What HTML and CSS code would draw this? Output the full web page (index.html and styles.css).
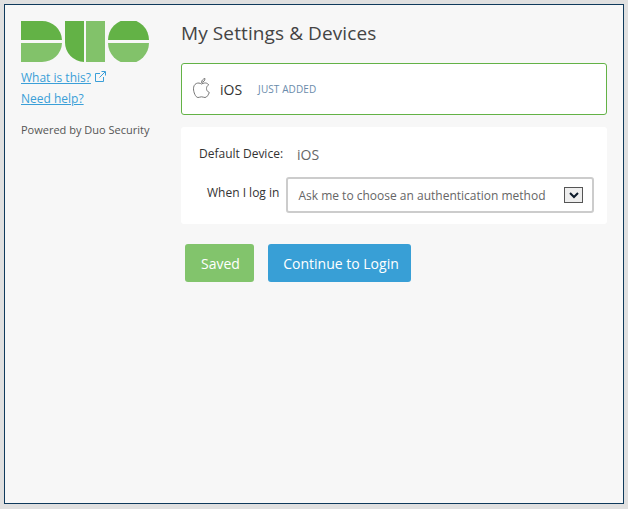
FILE: index.html
```html
<!DOCTYPE html>
<html lang="en">
<head>
    <meta charset="UTF-8">
    <title>My Settings &amp; Devices</title>
    <link rel="stylesheet" href="styles.css">
</head>
<body>
    <div class="frame">
        <div class="sidebar">
            <svg class="logo" width="128" height="41" viewBox="0 0 128 41">
                <path fill="#63b246" d="M0 0H21A20 19.5 0 0 1 41 19H0Z"/>
                <path fill="#82c26a" d="M0 22H41A20 19.5 0 0 1 21 41H0Z"/>
                <path fill="#63b246" d="M44 0H63V41A19.5 19.5 0 0 1 44 21.500Z"/>
                <path fill="#82c26a" d="M65 0H84V41H65Z"/>
                <path fill="#63b246" d="M87 19A20.500 20.500 0 0 1 128 19Z"/>
                <path fill="#82c26a" d="M87 22H128A20.500 20.500 0 0 1 87 22Z"/>
            </svg>
            <p class="side-link first">
                <a href="#">What is this?</a>
                <svg class="ext-icon" width="11" height="11" viewBox="0 0 11 11" fill="none" stroke="#3a9fd8" stroke-width="1">
                    <path d="M5 2.500H.5V10.500H8.500V6"/>
                    <path d="M4.500 6.500L10 1M6.500 .5H10.500V4.500"/>
                </svg>
            </p>
            <p class="side-link"><a href="#">Need help?</a></p>
            <p class="powered">Powered by Duo Security</p>
        </div>
        <div class="content">
            <h1 class="page-title">My Settings &amp; Devices</h1>
            <div class="device-card">
                <svg class="apple-icon" width="17" height="20" viewBox="0 0 17 20" fill="none" stroke="#777" stroke-width="1">
                    <path d="M8.500 6C7 5 5 4.700 3.300 5.500C1.300 6.500 .5 8.500 .5 10.800C.5 14 2.500 19.500 5 19.500C6.500 19.500 7 18.800 8.500 18.800C10 18.800 10.500 19.500 12 19.500C14 19.500 15.500 16.500 16.300 14.500C14.500 13.700 13.500 12.300 13.500 10.500C13.500 8.800 14.300 7.700 15.700 6.800C14.500 5.300 13 4.800 11.500 5C10.500 5.100 9.500 5.500 8.500 6Z"/>
                    <path d="M8.500 4.500C8.600 2.500 10 .9 12 .5C12 2.500 10.500 4.200 8.500 4.500Z"/>
                </svg>
                <span class="device-name">iOS</span>
                <span class="device-tag">JUST ADDED</span>
            </div>
            <div class="settings-card">
                <div class="settings-row default-row">
                    <span class="row-label default-label">Default Device:</span>
                    <span class="row-value">iOS</span>
                </div>
                <div class="settings-row login-row">
                    <span class="row-label login-label">When I log in</span>
                    <div class="select-box">
                        <span class="select-text">Ask me to choose an authentication method</span>
                        <span class="select-arrow">
                            <svg width="10" height="7" viewBox="0 0 10 7" fill="none" stroke="#0c1a2a" stroke-width="2">
                                <path d="M1 1L5 5L9 1"/>
                            </svg>
                        </span>
                    </div>
                </div>
            </div>
            <div class="actions">
                <button class="btn btn-saved">Saved</button>
                <button class="btn btn-continue">Continue to Login</button>
            </div>
        </div>
    </div>
</body>
</html>
```

FILE: styles.css
```css
* {
    box-sizing: border-box;
}
html, body {
    margin: 0;
    padding: 0;
    height: 100%;
}
body {
    background-color: #e0e0e0;
    padding: 4px 4px 5px 4px;
    font-family: "Open Sans", sans-serif;
    color: #555;
    overflow: hidden;
}
.frame {
    width: 620px;
    height: 500px;
    display: flex;
    background-color: #f7f7f7;
    border: 1px solid #0f3a5c;
}
.sidebar {
    width: 176px;
    flex: none;
    padding: 16px 0 0 16px;
}
.logo {
    display: block;
}
.side-link {
    margin: 0;
    font-size: 12px;
    line-height: 16px;
    margin-top: 5px;
}
.side-link.first {
    margin-top: 8px;
}
.side-link a {
    color: #3a9fd8;
    text-decoration: underline;
}
.ext-icon {
    margin-left: 1px;
}
.powered {
    margin: 15px 0 0 0;
    font-size: 11px;
    line-height: 16px;
    color: #555;
}
.content {
    width: 426px;
    flex: none;
}
.page-title {
    margin: 15px 0 0 0;
    font-size: 19px;
    font-weight: 400;
    line-height: 26px;
    letter-spacing: .1px;
    color: #444;
}
.device-card {
    margin-top: 17px;
    height: 52px;
    display: flex;
    align-items: center;
    padding: 0 0 3px 11px;
    background-color: #fff;
    border: 1px solid #63b246;
    border-radius: 3px;
}
.apple-icon {
    margin-right: 10px;
}
.device-name {
    font-size: 14px;
    margin-top: 3px;
    color: #333;
}
.device-tag {
    margin: 3px 0 0 16px;
    font-size: 10px;
    letter-spacing: .1px;
    color: #6a8bab;
}
.settings-card {
    margin-top: 12px;
    height: 97px;
    padding: 15px 13px 0 0;
    background-color: #fff;
    border-radius: 3px;
}
.settings-row {
    display: flex;
    align-items: center;
}
.row-label {
    flex: none;
    font-size: 12px;
    color: #333;
}
.default-row {
    height: 22px;
}
.default-label {
    margin-left: 18px;
}
.row-value {
    margin: 2px 0 0 14px;
    font-size: 14px;
    color: #666;
}
.login-row {
    margin-top: 13px;
}
.login-label {
    margin-left: 26px;
    margin-top: -5px;
}
.select-box {
    margin-left: 7px;
    width: 308px;
    height: 36px;
    display: flex;
    align-items: center;
    justify-content: space-between;
    padding: 0 9px 0 10px;
    background-color: #fff;
    border: 2px solid #ccc;
    border-radius: 3px;
}
.select-text {
    font-size: 12px;
    color: #666;
}
.select-arrow {
    width: 19px;
    height: 16px;
    display: flex;
    align-items: center;
    justify-content: center;
    background-color: #eee;
    border: 1px solid #555;
}
.actions {
    display: flex;
    gap: 14px;
    margin: 20px 0 0 4px;
}
.btn {
    height: 38px;
    padding: 0 0 0 2px;
    border: none;
    border-radius: 3px;
    font-family: "Open Sans", sans-serif;
    font-size: 14px;
    color: #fff;
}
.btn-saved {
    width: 69px;
    background-color: #82c46c;
}
.btn-continue {
    width: 143px;
    padding-left: 3px;
    background-color: #389fd6;
}
```
